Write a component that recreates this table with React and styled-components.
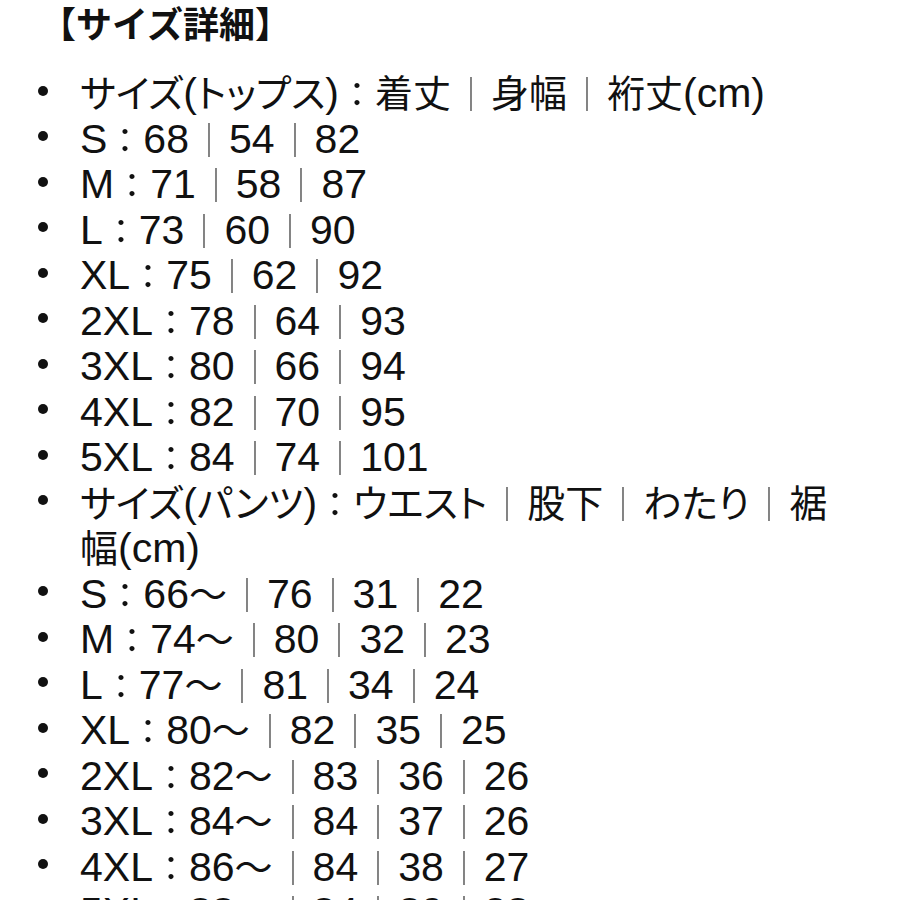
import React from 'react';
import styled, { createGlobalStyle } from 'styled-components';

const GlobalStyle = createGlobalStyle`
  html, body {
    margin: 0;
    padding: 0;
    background: #ffffff;
  }
  body {
    font-family: "Noto Sans CJK JP", "Noto Sans", sans-serif;
    color: #111111;
  }
`;

const Page = styled.div`
  width: 900px;
  height: 900px;
  overflow: hidden;
  padding: 0 38px 0 0;
  box-sizing: border-box;
`;

const Title = styled.h2`
  margin: 0;
  padding: 0 0 0 40px;
  font-size: 36px;
  font-weight: 700;
  line-height: 44px;
`;

const List = styled.ul`
  margin: 0;
  padding: 0;
  list-style: none;
  margin-top: 24px;
`;

const Item = styled.li`
  display: flex;
  align-items: flex-start;
  font-size: 38px;
  line-height: 45.5px;
  font-feature-settings: "palt";
`;

const Bullet = styled.span`
  flex: 0 0 80px;
  display: flex;
  align-items: center;
  padding-left: 38px;
  box-sizing: border-box;
  height: 45.5px;

  &::before {
    content: '';
    width: 10px;
    height: 10px;
    border-radius: 50%;
    background: #111111;
  }
`;

const Text = styled.span`
  flex: 1;
`;

// Latin letters and digits in the reference are drawn larger than the kana
const Latin = styled.span`
  font-family: "Liberation Sans", Arial, sans-serif;
  font-size: 41px;
  line-height: 0;
`;

// full-width colon / bar, given a fixed slot so the columns space like the shot
const Sep = styled.span`
  display: inline-block;
  width: ${({ $w }) => $w}px;
  text-align: center;
  font-feature-settings: normal;
  font-size: 34px;
  line-height: 0;
  color: ${({ $bar }) => ($bar ? '#555555' : '#111111')};
  will-change: transform;
`;

const rows = [
  'サイズ(トップス)：着丈｜身幅｜裄丈(cm)',
  'S：68｜54｜82',
  'M：71｜58｜87',
  'L：73｜60｜90',
  'XL：75｜62｜92',
  '2XL：78｜64｜93',
  '3XL：80｜66｜94',
  '4XL：82｜70｜95',
  '5XL：84｜74｜101',
  'サイズ(パンツ)：ウエスト｜股下｜わたり｜裾幅(cm)',
  'S：66〜｜76｜31｜22',
  'M：74〜｜80｜32｜23',
  'L：77〜｜81｜34｜24',
  'XL：80〜｜82｜35｜25',
  '2XL：82〜｜83｜36｜26',
  '3XL：84〜｜84｜37｜26',
  '4XL：86〜｜84｜38｜27',
  '5XL：88〜｜84｜39｜28',
];

function Mixed({ text }) {
  const parts = text.match(/[\x20-\x7e]+|[：｜]|[^\x20-\x7e：｜]+/g) || [];
  return parts.map((p, i) => {
    if (/^[\x20-\x7e]/.test(p)) return <Latin key={i}>{p}</Latin>;
    if (p === '：') return <Sep key={i} $w={36}>{p}</Sep>;
    if (p === '｜') return <Sep key={i} $w={40} $bar>{p}</Sep>;
    return <React.Fragment key={i}>{p}</React.Fragment>;
  });
}

export default function App() {
  return (
    <Page>
      <GlobalStyle />
      <Title>【サイズ詳細】</Title>
      <List>
        {rows.map((r) => (
          <Item key={r}>
            <Bullet />
            <Text>
              <Mixed text={r} />
            </Text>
          </Item>
        ))}
      </List>
    </Page>
  );
}
